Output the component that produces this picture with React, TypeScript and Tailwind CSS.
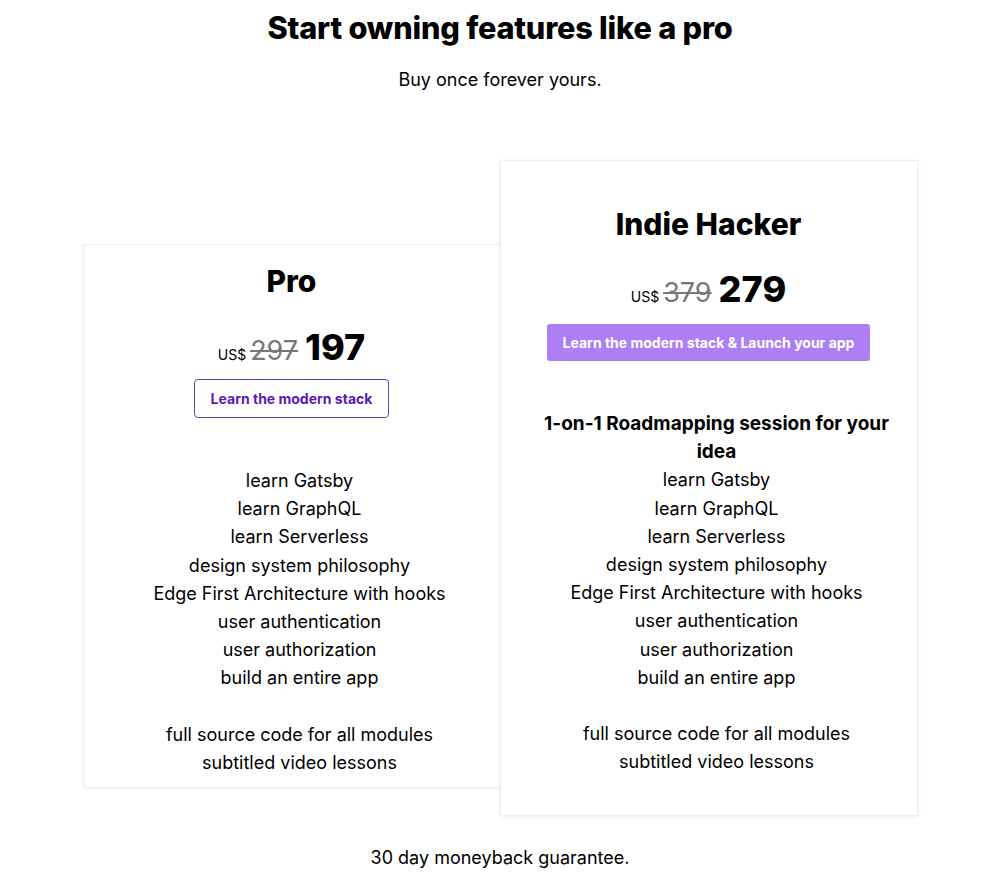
const features = [
  'learn Gatsby',
  'learn GraphQL',
  'learn Serverless',
  'design system philosophy',
  'Edge First Architecture with hooks',
  'user authentication',
  'user authorization',
  'build an entire app',
];

const extras = ['full source code for all modules', 'subtitled video lessons'];

function FeatureList({ bonus }: { bonus?: string }) {
  return (
    <ul className="flex flex-col items-center pl-[16px] text-[18px] leading-[28.2px] text-black">
      {bonus && <li className="font-bold text-[19px] w-[360px] text-center">{bonus}</li>}
      {features.map(f => (
        <li key={f}>{f}</li>
      ))}
      <li className="h-[28.2px]" />
      {extras.map(f => (
        <li key={f}>{f}</li>
      ))}
    </ul>
  );
}

function Price({ was, now }: { was: number; now: number }) {
  return (
    <div className="flex items-baseline justify-center">
      <span className="text-[14px] text-black">US$</span>
      <span className="ml-[4px] text-[27px] text-[#777] line-through decoration-[1.5px]">{was}</span>
      <span className="ml-[7px] text-[36px] font-extrabold text-black">{now}</span>
    </div>
  );
}

export default function App() {
  return (
    <div className="min-h-screen bg-white font-['Inter',sans-serif] text-black">
      <header className="flex flex-col items-center pt-[8px]">
        <h1 className="text-[30.7px] font-extrabold leading-[40px] tracking-[-0.2px]">Start owning features like a pro</h1>
        <p className="mt-[18px] text-[18px] leading-[28px]">Buy once forever yours.</p>
      </header>

      <div className="flex justify-center items-start mt-[66px]">
        <div className="w-[418px] mt-[84px] border border-[#eee] shadow-[0_1px_3px_rgba(0,0,0,0.06)] pt-[18px] pb-[10px] flex flex-col items-center">
          <h2 className="text-[30px] font-extrabold leading-[36px]">Pro</h2>
          <div className="mt-[33px] h-[42px] flex items-end">
            <Price was={297} now={197} />
          </div>
          <button className="mt-[5px] h-[39px] px-[16px] rounded-[4px] border border-[#6d3fb0] text-[14px] font-bold text-[#5b19b8]">
            Learn the modern stack
          </button>
          <div className="mt-[49px]">
            <FeatureList />
          </div>
        </div>

        <div className="w-[418px] -ml-px border border-[#eee] shadow-[0_1px_4px_rgba(0,0,0,0.08)] pt-[45px] pb-[38px] flex flex-col items-center">
          <h2 className="text-[30px] font-extrabold leading-[36px]">Indie Hacker</h2>
          <div className="mt-[32px] h-[42px] flex items-end">
            <Price was={379} now={279} />
          </div>
          <button className="mt-[8px] h-[37px] px-[16px] rounded-[3px] bg-[#ae7ef5] text-[14px] font-bold text-white">
            Learn the modern stack &amp; Launch your app
          </button>
          <div className="mt-[49px]">
            <FeatureList bonus="1-on-1 Roadmapping session for your idea" />
          </div>
        </div>
      </div>

      <p className="text-center text-[18px] leading-[28px] mt-[28px]">30 day moneyback guarantee.</p>
    </div>
  );
}
